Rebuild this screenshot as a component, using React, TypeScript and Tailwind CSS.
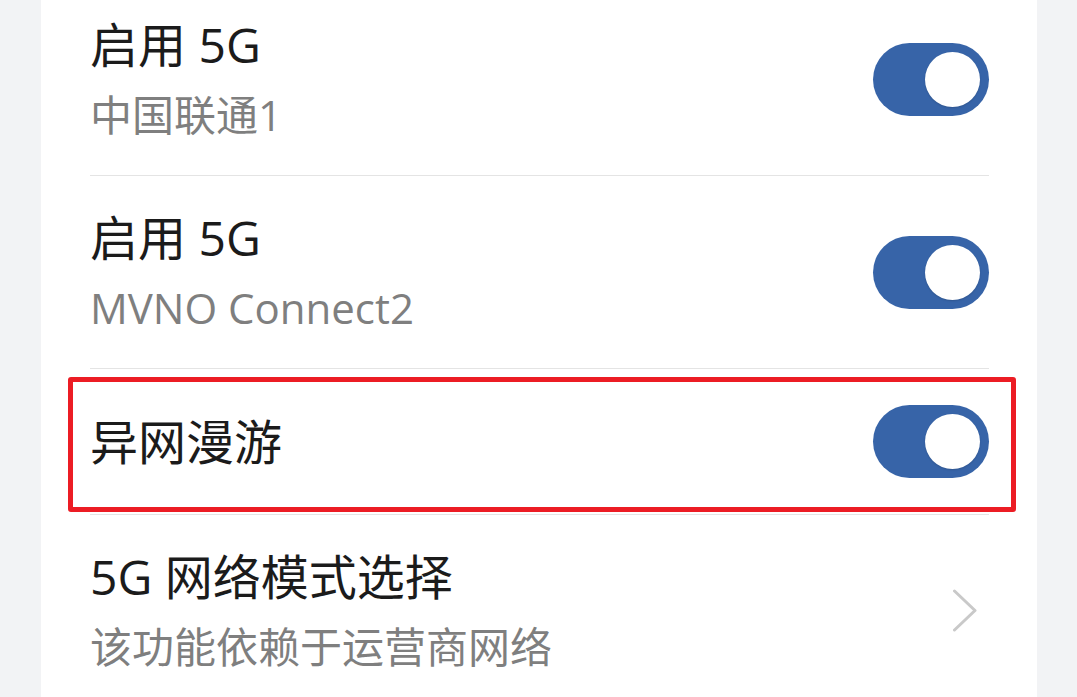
import React from "react";

const font = { fontFamily: '"Open Sans", "Noto Sans CJK SC", sans-serif' };

function Toggle() {
  return (
    <div className="w-[116px] h-[73px] rounded-full bg-[#3764a8] flex items-center justify-end pr-[9px] shrink-0">
      <div className="w-[55px] h-[55px] rounded-full bg-white shadow-[0_1px_2px_rgba(0,0,0,0.15)]" />
    </div>
  );
}

function Chevron() {
  return (
    <div className="w-[116px] flex justify-end shrink-0">
      <svg width="36" height="44" viewBox="0 0 36 44" fill="none">
        <polyline points="1.5,2 22,21.5 1.5,41" stroke="#c9c9c9" strokeWidth="3" strokeLinecap="round" strokeLinejoin="round" />
      </svg>
    </div>
  );
}

function Row({ title, subtitle, right, tall, highlight }: { title: string; subtitle?: string; right: React.ReactNode; tall?: boolean; highlight?: boolean }) {
  return (
    <div className="relative">
      <div className={`flex items-center pl-[49px] pr-[48px] ${tall ? "h-[192px]" : "h-[145px]"}`}>
        <div className="flex-1 flex flex-col">
          <div className="text-[48px] leading-[58px] text-[#1b1b1b] font-normal">{title}</div>
          {subtitle && <div className="text-[42px] leading-[56px] mt-[13px] text-[#7f7f7f]">{subtitle}</div>}
        </div>
        {right}
      </div>
      <div className="ml-[49px] mr-[48px] h-px bg-[#e4e4e4]" />
      {highlight && (
        <div className="absolute left-[27px] right-[21px] top-[8px] h-[135px] border-[5px] border-[#ec1c24] rounded-[3px]" />
      )}
    </div>
  );
}

export default function App() {
  return (
    <div className="w-[1077px] h-[697px] overflow-hidden bg-[#f2f3f5] flex" style={font}>
      <div className="ml-[41px] w-[996px] bg-white mt-[-17px] self-start">
        <Row title="启用 5G" subtitle="中国联通1" right={<Toggle />} tall />
        <Row title="启用 5G" subtitle="MVNO Connect2" right={<Toggle />} tall />
        <Row title="异网漫游" right={<Toggle />} highlight />
        <Row title="5G 网络模式选择" subtitle="该功能依赖于运营商网络" right={<Chevron />} tall />
      </div>
    </div>
  );
}
